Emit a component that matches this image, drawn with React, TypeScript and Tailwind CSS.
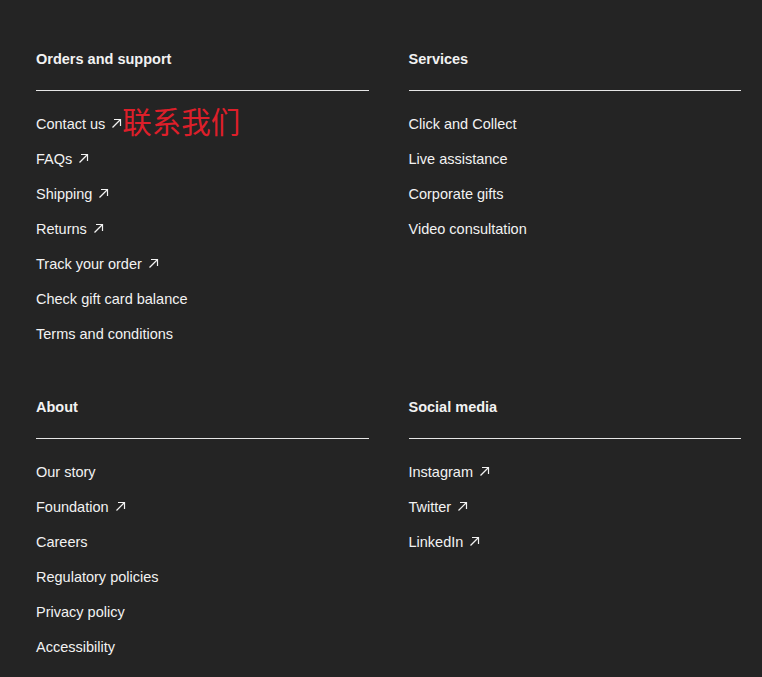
import React from "react";

const Arrow = () => (
  <svg width="11" height="11" viewBox="0 0 11 11" className="inline-block ml-[6px] -mt-[3px]" fill="none" stroke="currentColor" strokeWidth="1.2">
    <path d="M1.5 9.5 L9.5 1.5" />
    <path d="M3 1.5 H9.5 V8" />
  </svg>
);

type Link = { label: string; ext?: boolean; note?: string };

const Section = ({ title, links }: { title: string; links: Link[] }) => (
  <div className="flex flex-col">
    <h3 className="text-[14.5px] leading-[20px] font-semibold text-[#f2f2f2]">{title}</h3>
    <div className="mt-[21px] h-px bg-[#e6e6e6]" />
    <ul className="mt-[23px] flex flex-col gap-[15px]">
      {links.map((l) => (
        <li key={l.label} className="text-[14.5px] leading-[20px] text-[#f2f2f2] flex items-center">
          <span className="relative">
            {l.label}
            {l.ext && <Arrow />}
            {l.note && (
              <span
                className="absolute left-full top-[-14px] text-[29.5px] leading-[40px] text-[#dd1f2a] whitespace-nowrap"
                style={{ fontFamily: '"Noto Sans CJK SC", sans-serif' }}
              >
                {l.note}
              </span>
            )}
          </span>
        </li>
      ))}
    </ul>
  </div>
);

export default function App() {
  return (
    <div
      className="min-h-[677px] bg-[#242424] pl-[36px] pr-[21px] pt-[49px] pb-[20px]"
      style={{ fontFamily: '"Liberation Sans", Arial, sans-serif' }}
    >
      <div className="grid grid-cols-2 gap-x-[40px] gap-y-[53px]">
        <Section
          title="Orders and support"
          links={[
            { label: "Contact us", ext: true, note: "联系我们" },
            { label: "FAQs", ext: true },
            { label: "Shipping", ext: true },
            { label: "Returns", ext: true },
            { label: "Track your order", ext: true },
            { label: "Check gift card balance" },
            { label: "Terms and conditions" },
          ]}
        />
        <Section
          title="Services"
          links={[
            { label: "Click and Collect" },
            { label: "Live assistance" },
            { label: "Corporate gifts" },
            { label: "Video consultation" },
          ]}
        />
        <Section
          title="About"
          links={[
            { label: "Our story" },
            { label: "Foundation", ext: true },
            { label: "Careers" },
            { label: "Regulatory policies" },
            { label: "Privacy policy" },
            { label: "Accessibility" },
          ]}
        />
        <Section
          title="Social media"
          links={[
            { label: "Instagram", ext: true },
            { label: "Twitter", ext: true },
            { label: "LinkedIn", ext: true },
          ]}
        />
      </div>
    </div>
  );
}
